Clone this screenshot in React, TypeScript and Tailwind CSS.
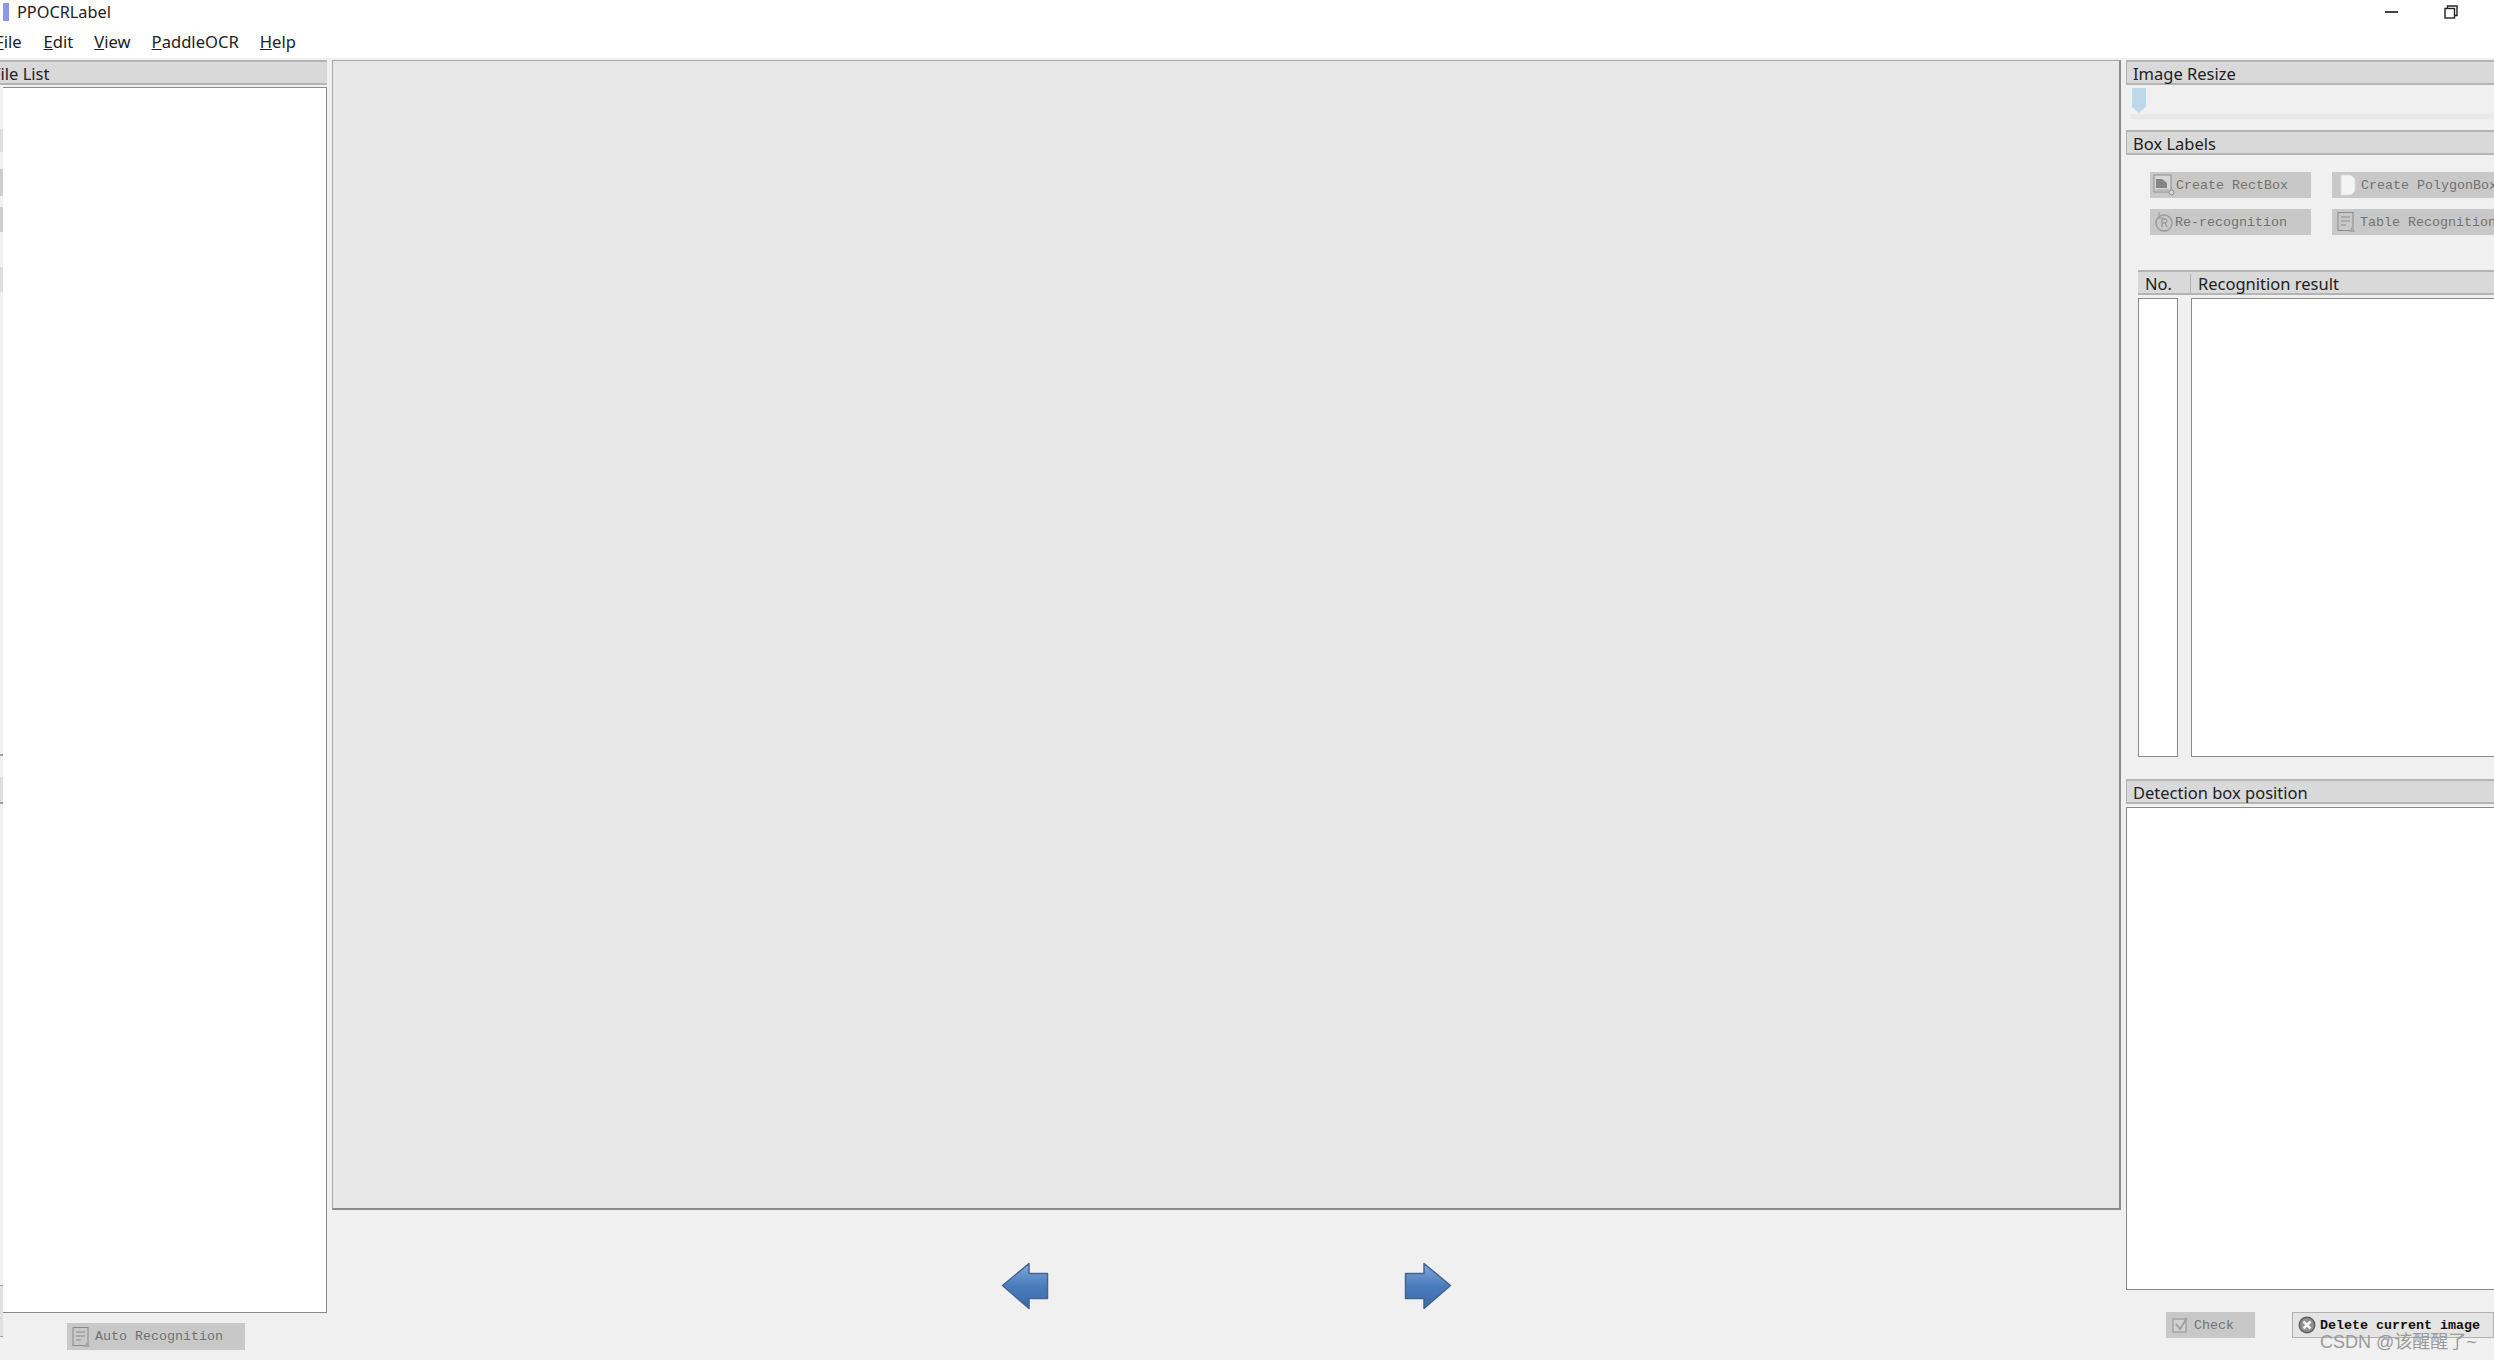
import type { ReactNode } from 'react'

const uiFont = 'font-["Noto_Sans","Liberation_Sans",sans-serif]'
const btnFont = 'font-["Liberation_Mono","DejaVu_Sans_Mono",monospace]'

function DockHeader({ children, className = '' }: { children: ReactNode; className?: string }) {
  return (
    <div className={`h-[25px] shrink-0 bg-[#d9d9d9] border-t-2 border-b-2 border-l border-[#b4b4b4] flex items-center pl-[6px] pt-[2px] text-[16.5px] leading-[20px] text-[#222] ${className}`}>
      {children}
    </div>
  )
}

function RectIcon() {
  return (
    <svg width="22" height="22" viewBox="0 0 22 22" className="shrink-0">
      <rect x="1" y="1" width="17" height="17" fill="#d6d6d6" stroke="#8d8d8d" />
      <path d="M3 14V5h6l5 4v5z" fill="#858585" />
      <path d="M3 16h13" stroke="#a0a0a0" />
      <circle cx="18.5" cy="18.5" r="2.5" fill="#d6d6d6" stroke="#8d8d8d" />
    </svg>
  )
}

function PolygonIcon() {
  return (
    <svg width="16" height="22" viewBox="0 0 16 22" className="shrink-0">
      <path d="M1 1h10l4 4v12l-4 4H1z" fill="#f4f4f4" stroke="#dadada" />
    </svg>
  )
}

function RecogIcon() {
  return (
    <svg width="20" height="22" viewBox="0 0 20 22" className="shrink-0">
      <circle cx="10" cy="12" r="8" fill="none" stroke="#9c9c9c" strokeWidth="1.5" />
      <path d="M5 1v6h5" fill="none" stroke="#9c9c9c" />
      <path d="M8 16V8h3a2 2 0 0 1 0 4H8m3 0l2 4" fill="none" stroke="#8a8a8a" />
    </svg>
  )
}

function TableIcon() {
  return (
    <svg width="20" height="22" viewBox="0 0 20 22" className="shrink-0">
      <rect x="1" y="1.5" width="15" height="18" fill="none" stroke="#8a8a8a" />
      <path d="M4 6h9M4 10h9M4 14h5" stroke="#8a8a8a" fill="none" />
      <path d="M12 21l3-6 3 6z" fill="#a8a8a8" />
    </svg>
  )
}

function CheckIcon() {
  return (
    <svg width="20" height="20" viewBox="0 0 20 20" className="shrink-0">
      <rect x="2" y="4" width="13" height="13" fill="#d2d2d2" stroke="#a3a3a3" strokeWidth="1.5" />
      <path d="M5 9l4 5 7-11" fill="none" stroke="#a0a0a0" strokeWidth="2" />
    </svg>
  )
}

function DeleteIcon() {
  return (
    <svg width="18" height="18" viewBox="0 0 18 18" className="shrink-0">
      <circle cx="9" cy="9" r="8.5" fill="#5f5f5f" />
      <circle cx="9" cy="9" r="7" fill="#8f8f8f" />
      <path d="M5.5 5.5l7 7M12.5 5.5l-7 7" stroke="#f4f4f4" strokeWidth="2.6" />
    </svg>
  )
}

function Arrow({ flip = false }: { flip?: boolean }) {
  const id = flip ? 'arrowRight' : 'arrowLeft'
  return (
    <svg width="48" height="48" viewBox="0 0 48 48" className={flip ? '-scale-x-100' : ''}>
      <defs>
        <linearGradient id={id} x1="0" y1="0" x2="0" y2="1">
          <stop offset="0" stopColor="#7fa8d8" />
          <stop offset="0.5" stopColor="#4a7cbc" />
          <stop offset="1" stopColor="#3a69aa" />
        </linearGradient>
      </defs>
      <path
        d="M1.5 23.5L28 1.5v10h18.5v25H28v10z"
        fill={`url(#${id})`}
        stroke="#45648f"
        strokeWidth="1.5"
        strokeLinejoin="round"
      />
    </svg>
  )
}

function ToolButton({ icon, label, className = '', enabled = false }: { icon: ReactNode; label: string; className?: string; enabled?: boolean }) {
  return (
    <div
      className={`h-[26px] flex items-center gap-[1px] pl-[3px] whitespace-nowrap overflow-hidden text-[13.33px] ${btnFont} ${
        enabled ? 'bg-[#e4e4e4] border border-[#b0b0b0] text-[#111] font-bold' : 'bg-[#c8c8c8] text-[#727272]'
      } ${className}`}
    >
      {icon}
      <span className="pt-[1px]">{label}</span>
    </div>
  )
}

// what shows of the neighbouring dock at the very left edge of the window
function EdgeStrip() {
  return (
    <div className="w-[3px] shrink-0 flex flex-col">
      <div className="h-[42px] shrink-0" />
      <div className="h-[23px] shrink-0 bg-[#dedede]" />
      <div className="h-[17px] shrink-0" />
      <div className="h-[27px] shrink-0 bg-[#cdcdcd]" />
      <div className="h-[11px] shrink-0" />
      <div className="h-[25px] shrink-0 bg-[#cdcdcd]" />
      <div className="h-[35px] shrink-0" />
      <div className="h-[25px] shrink-0 bg-[#dedede]" />
      <div className="h-[462px] shrink-0" />
      <div className="h-[2px] shrink-0 bg-[#a0a0a0]" />
      <div className="h-[21px] shrink-0" />
      <div className="h-[25px] shrink-0 bg-[#dedede]" />
      <div className="h-[2px] shrink-0 bg-[#a0a0a0]" />
      <div className="h-[481px] shrink-0" />
      <div className="flex-1 bg-[#e0e0e0] border-t border-[#a0a0a0]" />
    </div>
  )
}

export default function App() {
  return (
    <div className={`w-[2494px] h-[1360px] overflow-hidden bg-[#f0f0f0] flex flex-col text-[#222] ${uiFont}`}>
      {/* title bar */}
      <div className="h-[24px] shrink-0 bg-white flex items-center">
        <div className="ml-[3px] w-[6px] h-[18px] bg-[#8f97e8] shrink-0" />
        <span className="ml-[8px] text-[16.3px]">PPOCRLabel</span>
        <div className="ml-auto flex items-center gap-[46px] pr-[36px]">
          <div className="w-[13px] h-[2px] bg-[#444]" />
          <svg width="14" height="14" viewBox="0 0 14 14">
            <path d="M3.5 3V1h9.5v9.5h-2.5" fill="none" stroke="#222" strokeWidth="1.4" />
            <rect x="1" y="3.5" width="9.5" height="9.5" fill="none" stroke="#222" strokeWidth="1.4" />
          </svg>
        </div>
      </div>

      {/* menu */}
      <div className="h-[34px] shrink-0 bg-white flex items-center pt-[3px] text-[16.6px] overflow-hidden">
        <span className="-ml-[5px]"><u>F</u>ile</span>
        <span className="ml-[22px]"><u>E</u>dit</span>
        <span className="ml-[21px]"><u>V</u>iew</span>
        <span className="ml-[21px]"><u>P</u>addleOCR</span>
        <span className="ml-[21px]"><u>H</u>elp</span>
      </div>

      <div className="flex-1 flex min-h-0 pt-[2px]">
        {/* left dock */}
        <div className="w-[327px] shrink-0 flex flex-col">
          <DockHeader className="border-l-0 pl-0 overflow-hidden">
            <span className="-ml-[14px]">File List</span>
          </DockHeader>
          <div className="mt-[2px] h-[1226px] flex">
            <EdgeStrip />
            <div className="flex-1 bg-white border border-[#8a8a8a] border-l-0" />
          </div>
          <div className="flex">
            <div className="w-[3px] h-[24px] shrink-0 bg-[#e0e0e0] border-b border-[#a0a0a0]" />
            <div className="pl-[64px] pt-[10px]">
              <ToolButton icon={<TableIcon />} label="Auto Recognition" className="w-[178px] h-[27px] pl-[5px] gap-[3px]" />
            </div>
          </div>
        </div>

        {/* canvas + navigation */}
        <div className="w-[1789px] shrink-0 ml-[5px] flex flex-col">
          <div className="h-[1150px] bg-[#e7e7e7] border border-[#a8a8a8] border-r-2 border-b-2 border-r-[#8c8c8c] border-b-[#8c8c8c]" />
          <div className="flex pl-[669px] pt-[52px] gap-[355px]">
            <Arrow />
            <Arrow flip />
          </div>
        </div>

        {/* right dock */}
        <div className="flex-1 min-w-0 ml-[5px] flex flex-col">
          <DockHeader>Image Resize</DockHeader>
          <div className="h-[45px] shrink-0 relative">
            <div className="absolute left-[6px] top-[3px] w-[14px] h-[25px] bg-[#bcd8ea] [clip-path:polygon(0_0,100%_0,100%_75%,50%_100%,0_75%)]" />
            <div className="absolute left-[5px] right-0 top-[29px] h-[5px] bg-[#e8e8e8]" />
          </div>
          <DockHeader>Box Labels</DockHeader>
          <div className="pl-[24px] pt-[17px] grid grid-cols-[161px_1fr] gap-x-[21px] gap-y-[11px] overflow-hidden">
            <ToolButton icon={<RectIcon />} label="Create RectBox" />
            <ToolButton icon={<PolygonIcon />} label="Create PolygonBox" className="pl-[8px] gap-[5px] w-[200px]" />
            <ToolButton icon={<RecogIcon />} label="Re-recognition" className="pl-[4px]" />
            <ToolButton icon={<TableIcon />} label="Table Recognition" className="pl-[5px] gap-[3px] w-[200px]" />
          </div>
          <div className="ml-[12px] mt-[35px] flex flex-col">
            <div className="h-[25px] bg-[#d9d9d9] border-t-2 border-b-2 border-[#b4b4b4] flex items-center pt-[2px] text-[16.5px] leading-[20px]">
              <div className="w-[53px] pl-[7px] border-r border-[#b4b4b4]">No.</div>
              <div className="pl-[7px]">Recognition result</div>
            </div>
            <div className="mt-[3px] h-[459px] flex gap-[13px]">
              <div className="w-[40px] bg-white border border-[#8a8a8a]" />
              <div className="flex-1 bg-white border border-[#8a8a8a] border-r-0" />
            </div>
          </div>
          <DockHeader className="mt-[22px]">Detection box position</DockHeader>
          <div className="mt-[3px] h-[483px] shrink-0 bg-white border border-[#8a8a8a] border-r-0" />
          <div className="pl-[40px] pt-[22px] flex gap-[37px]">
            <ToolButton icon={<CheckIcon />} label="Check" className="w-[89px] shrink-0 pl-[5px] gap-[3px]" />
            <ToolButton icon={<DeleteIcon />} label="Delete current image" className="flex-1 min-w-0 pl-[5px] gap-[4px]" enabled />
          </div>
          <div className='ml-[194px] -mt-[6px] text-[18px] leading-[20px] text-[#9a9a9a] whitespace-nowrap font-["Liberation_Sans","Noto_Sans_CJK_SC",sans-serif]'>
            CSDN @该醒醒了~
          </div>
        </div>
      </div>
    </div>
  )
}
